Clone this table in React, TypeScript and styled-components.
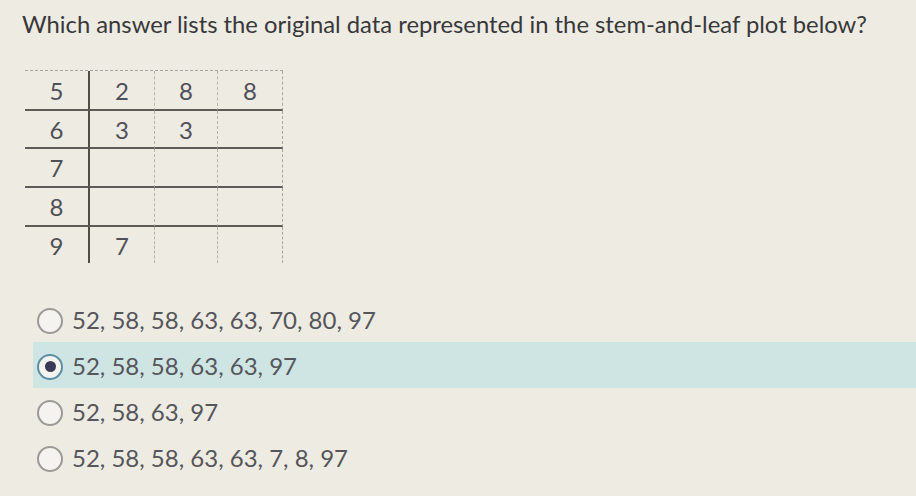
import styled, { createGlobalStyle } from "styled-components";

const Global = createGlobalStyle`
    html, body {
        margin: 0;
        padding: 0;
        background: #eeebe2;
    }
    body {
        font-family: Lato, "Open Sans", sans-serif;
    }
`;

const Page = styled.div`
    width: 916px;
    height: 496px;
    overflow: hidden;
    padding-top: 10px;
    box-sizing: border-box;
`;

const Question = styled.h1`
    margin: 0 0 0 22px;
    font-size: 23.8px;
    line-height: 28px;
    font-weight: 400;
    color: #38383c;
`;

const Plot = styled.div`
    display: grid;
    grid-template-columns: 65px 65px 63px 65px;
    grid-template-rows: 40px 38px 39px 39px 36px;
    margin: 32px 0 0 25px;
    width: 258px;
    border-top: 1px dashed #a8a6a0;
`;

const Cell = styled.div<{ $stem?: boolean; $last?: boolean; $lastRow?: boolean }>`
    display: flex;
    align-items: center;
    justify-content: center;
    font-size: 24px;
    color: #505058;
    box-sizing: border-box;
    border-bottom: ${(p) => (p.$lastRow ? "none" : "2px solid #5c5b58")};
    border-right: ${(p) =>
        p.$stem ? "2px solid #4e4d4a" : p.$last ? "1px dashed #a8a6a0" : "1px dashed #b4b2ab"};
`;

const Options = styled.div`
    display: flex;
    flex-direction: column;
    margin-top: 33px;
`;

const Option = styled.label<{ $selected?: boolean }>`
    display: flex;
    align-items: center;
    gap: 9px;
    height: 46px;
    margin-left: 33px;
    padding-left: 4px;
    background: ${(p) => (p.$selected ? "#cfe5e3" : "transparent")};
    font-size: 24px;
    color: #55555c;
`;

const Radio = styled.span<{ $selected?: boolean }>`
    width: 26px;
    height: 26px;
    border-radius: 50%;
    box-sizing: border-box;
    border: 2px solid ${(p) => (p.$selected ? "#5d8ea6" : "#9b9a98")};
    background: #f4f3f0;
    display: flex;
    align-items: center;
    justify-content: center;
    flex-shrink: 0;
    margin-top: 3px;

    &::after {
        content: "";
        display: ${(p) => (p.$selected ? "block" : "none")};
        width: 11px;
        height: 11px;
        border-radius: 50%;
        background: #3a3a56;
    }
`;

const rows = [
    ["5", "2", "8", "8"],
    ["6", "3", "3", ""],
    ["7", "", "", ""],
    ["8", "", "", ""],
    ["9", "7", "", ""],
];

const answers = [
    "52, 58, 58, 63, 63, 70, 80, 97",
    "52, 58, 58, 63, 63, 97",
    "52, 58, 63, 97",
    "52, 58, 58, 63, 63, 7, 8, 97",
];

const App = () => {
    return (
        <>
            <Global />
            <Page>
                <Question>Which answer lists the original data represented in the stem-and-leaf plot below?</Question>
                <Plot>
                    {rows.map((row, r) =>
                        row.map((val, c) => (
                            <Cell
                                key={`${r}-${c}`}
                                $stem={c === 0}
                                $last={c === 3}
                                $lastRow={r === rows.length - 1}
                            >
                                {val}
                            </Cell>
                        ))
                    )}
                </Plot>
                <Options>
                    {answers.map((a, i) => (
                        <Option key={i} $selected={i === 1}>
                            <Radio $selected={i === 1} />
                            {a}
                        </Option>
                    ))}
                </Options>
            </Page>
        </>
    );
};

export default App;
